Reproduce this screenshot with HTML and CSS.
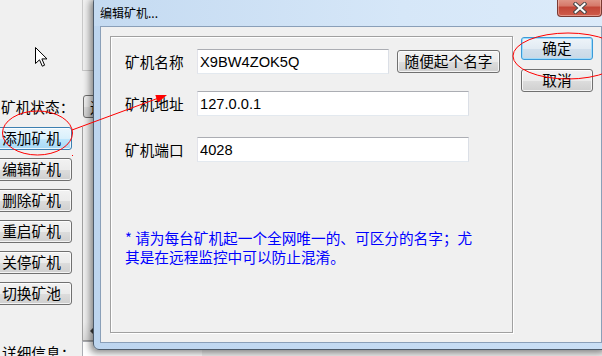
FILE: index.html
```html
<!DOCTYPE html>
<html lang="zh-CN">
<head>
    <meta charset="UTF-8">
    <meta name="viewport" content="width=device-width, initial-scale=1.0">
    <title>编辑矿机</title>
    <link rel="stylesheet" href="styles.css">
</head>
<body>
<div class="desktop">

    <!-- 后面的主窗口 -->
    <div class="app">
        <div class="app-top"></div>
        <div class="status-row">
            <span class="app-label">矿机状态：</span>
            <div class="combo">运行中</div>
        </div>
        <div class="main-row">
            <div class="btn-col">
                <button class="btn btn-hot">添加矿机</button>
                <button class="btn">编辑矿机</button>
                <button class="btn">删除矿机</button>
                <button class="btn">重启矿机</button>
                <button class="btn">关停矿机</button>
                <button class="btn">切换矿池</button>
            </div>
            <div class="miner-list">
                <div class="hscroll">
                    <span class="hscroll-btn"><span class="hscroll-arrow"></span></span>
                </div>
            </div>
        </div>
        <div class="detail-row">
            <span class="app-label detail-label">详细信息：</span>
            <div class="detail-box"></div>
        </div>
    </div>

    <svg class="cursor" width="13" height="20" viewBox="0 0 13 20">
        <path d="M0.5 0.5 V16.5 L4.5 12.8 L7.3 19.2 L9.6 18.2 L6.9 11.9 H12 Z" fill="#fff" stroke="#000" stroke-width="1" stroke-linejoin="miter"/>
    </svg>

    <!-- 编辑矿机对话框 -->
    <div class="dialog">
        <div class="title-bar">
            <span class="title-text">编辑矿机...</span>
            <button class="btn-close">
                <svg width="14" height="12" viewBox="0 0 14 12">
                    <path d="M2.5 2 L11.5 10 M11.5 2 L2.5 10" stroke="#4a4a4a" stroke-width="4" stroke-linecap="square"/>
                    <path d="M2.5 2 L11.5 10 M11.5 2 L2.5 10" stroke="#fff" stroke-width="2" stroke-linecap="square"/>
                </svg>
            </button>
        </div>
        <div class="client">
            <div class="group">
                <div class="field-row">
                    <span class="field-label">矿机名称</span>
                    <input class="field-input input-short" type="text" value="X9BW4ZOK5Q">
                    <button class="btn btn-random">随便起个名字</button>
                </div>
                <div class="field-row row-addr">
                    <span class="field-label">矿机地址</span>
                    <input class="field-input input-long" type="text" value="127.0.0.1">
                </div>
                <div class="field-row row-port">
                    <span class="field-label">矿机端口</span>
                    <input class="field-input input-long" type="text" value="4028">
                </div>
                <p class="note">* 请为每台矿机起一个全网唯一的、可区分的名字；尤<br>其是在远程监控中可以防止混淆。</p>
            </div>
            <div class="side-buttons">
                <button class="btn btn-side btn-default">确定</button>
                <button class="btn btn-side">取消</button>
            </div>
        </div>
    </div>

    <!-- 红色标注 -->
    <svg class="marks" width="602" height="356" viewBox="0 0 602 356">
        <ellipse cx="568" cy="56" rx="55" ry="23" fill="none" stroke="#f00" stroke-width="1"/>
        <ellipse cx="37.5" cy="133" rx="35" ry="22" fill="none" stroke="#f00" stroke-width="1"/>
        <line x1="72" y1="130" x2="160" y2="97.5" stroke="#f00" stroke-width="1"/>
        <polygon points="167,95 155.3,95 158,102.5" fill="#f00"/>
        <rect x="72" y="155" width="1" height="1" fill="#f00"/>
    </svg>
</div>
</body>
</html>
```

FILE: styles.css
```css
* {
    box-sizing: border-box;
}

body {
    margin: 0;
    background-color: #f0f0f0;
    font-family: "Noto Sans CJK SC", sans-serif;
    font-size: 14.67px;
    color: #000;
    overflow: hidden;
}

.desktop {
    position: relative;
    width: 602px;
    height: 356px;
    overflow: hidden;
}

/* 主窗口 */
.app {
    display: flex;
    flex-direction: column;
}

.app-top {
    margin-left: 82px;
    width: 60px;
    height: 71px;
    border-left: 1px solid #c9c9c9;
    border-bottom: 1px solid #c9c9c9;
}

.status-row {
    display: flex;
    align-items: center;
    margin-top: 24px;
    height: 23px;
}

.app-label {
    width: 83px;
    padding-left: 1px;
    line-height: 18px;
    white-space: nowrap;
}

.combo {
    width: 120px;
    height: 23px;
    padding-left: 6px;
    border: 1px solid #707070;
    border-radius: 3px;
    line-height: 21px;
    background: linear-gradient(#f2f2f2 0%, #ebebeb 50%, #dddddd 51%, #cfcfcf 100%);
}

.main-row {
    display: flex;
    margin-top: 9px;
}

.btn-col {
    display: flex;
    flex-direction: column;
    gap: 8px;
    margin-left: -9px;
    width: 81px;
}

.btn {
    height: 23px;
    padding: 0;
    font-family: "Noto Sans CJK SC", sans-serif;
    font-size: 14.67px;
    line-height: 1;
    color: #000;
    border: 1px solid #707070;
    border-radius: 3px;
    background: linear-gradient(#f2f2f2 0%, #ebebeb 50%, #dddddd 51%, #cfcfcf 100%);
    box-shadow: inset 0 0 0 1px rgba(255, 255, 255, 0.75);
}

.btn-hot {
    border-color: #3c7fb1;
    background: linear-gradient(#eaf6fd 0%, #d9f0fc 50%, #bee6fd 51%, #a7d9f5 100%);
}

.miner-list {
    display: flex;
    flex-direction: column;
    justify-content: flex-end;
    margin-left: 10px;
    width: 120px;
    height: 214px;
    border-left: 1px solid #a0a0a0;
    border-bottom: 1px solid #a0a0a0;
}

.hscroll {
    display: flex;
    height: 18px;
    background-color: #e8e8e8;
}

.hscroll-btn {
    display: flex;
    align-items: center;
    justify-content: center;
    width: 17px;
    background: linear-gradient(to bottom, #f0f0f0, #dcdcdc);
}

.hscroll-arrow {
    width: 0;
    height: 0;
    border-top: 4px solid transparent;
    border-bottom: 4px solid transparent;
    border-right: 4px solid #404040;
}

.detail-row {
    display: flex;
    align-items: flex-start;
}

.detail-label {
    width: 82px;
    padding-left: 2px;
    padding-top: 3px;
}

.detail-box {
    width: 120px;
    height: 30px;
    background-color: #fff;
    border-top: 1px solid #abadb3;
    border-left: 1px solid #abadb3;
}

.cursor {
    position: absolute;
    left: 35px;
    top: 47px;
}

/* 对话框 */
.dialog {
    position: absolute;
    left: 93px;
    top: -4px;
    width: 516px;
    padding: 0 6px 6px;
    background: linear-gradient(to right, #bdd5ef, #cadff5);
    border: 1px solid #4d5b6b;
    border-radius: 6px;
    box-shadow: -3px 3px 7px rgba(0, 0, 0, 0.45);
}

.title-bar {
    display: flex;
    justify-content: space-between;
    align-items: flex-start;
    height: 29px;
    margin: 0 -6px;
    padding: 0 6px;
    background: linear-gradient(to right, #c4daf1, #d6e7f8 60%, #dcebfa);
    border-radius: 5px 5px 0 0;
}

.title-text {
    margin-top: 8px;
    font-size: 12px;
    line-height: 16px;
}

.btn-close {
    display: flex;
    align-items: center;
    justify-content: center;
    width: 45px;
    height: 20px;
    padding: 2px 0 0;
    border: 1px solid #7a3a33;
    border-top: none;
    border-radius: 0 0 4px 4px;
    background: linear-gradient(#e3a193 0%, #d67a6b 45%, #c24637 55%, #cf5d4c 100%);
    box-shadow: inset 0 0 0 1px rgba(255, 220, 210, 0.45);
}

.client {
    display: flex;
    align-items: flex-start;
    height: 317px;
    padding: 9px 0 0 9px;
    background-color: #f0f0f0;
    border: 1px solid #8a9fb8;
}

.group {
    width: 403px;
    height: 297px;
    padding: 12px 0 0 14px;
    border: 1px solid #a0a0a0;
    box-shadow: 1px 1px 0 #fff, inset 1px 1px 0 #fff;
}

.field-row {
    display: flex;
    align-items: center;
    height: 25px;
}

.row-addr {
    margin-top: 17px;
}

.row-port {
    margin-top: 21px;
}

.field-label {
    width: 72px;
    line-height: 18px;
}

.field-input {
    height: 25px;
    padding: 0 2px;
    font-family: "Liberation Sans", "Noto Sans CJK SC", sans-serif;
    font-size: 14.67px;
    color: #000;
    background-color: #fff;
    border: 1px solid;
    border-color: #abadb3 #dbdfe6 #e3e9ef #e2e3ea;
    outline: none;
}

.input-short {
    width: 192px;
}

.input-long {
    width: 272px;
}

.btn-random {
    width: 103px;
    margin-left: 8px;
}

.note {
    margin: 66px 0 0;
    line-height: 19px;
    color: #0000ff;
    white-space: nowrap;
}

.side-buttons {
    display: flex;
    flex-direction: column;
    gap: 9px;
    margin-left: 8px;
    margin-top: 1px;
}

.btn-side {
    width: 72px;
}

.btn-default {
    border-color: #3c9ad8;
    background: linear-gradient(#eef4f9 0%, #e2ebf3 50%, #d3e0ec 51%, #c8d8e6 100%);
    box-shadow: inset 0 0 0 1px #9fdcfb;
}

.marks {
    position: absolute;
    left: 0;
    top: 0;
    pointer-events: none;
}
```
